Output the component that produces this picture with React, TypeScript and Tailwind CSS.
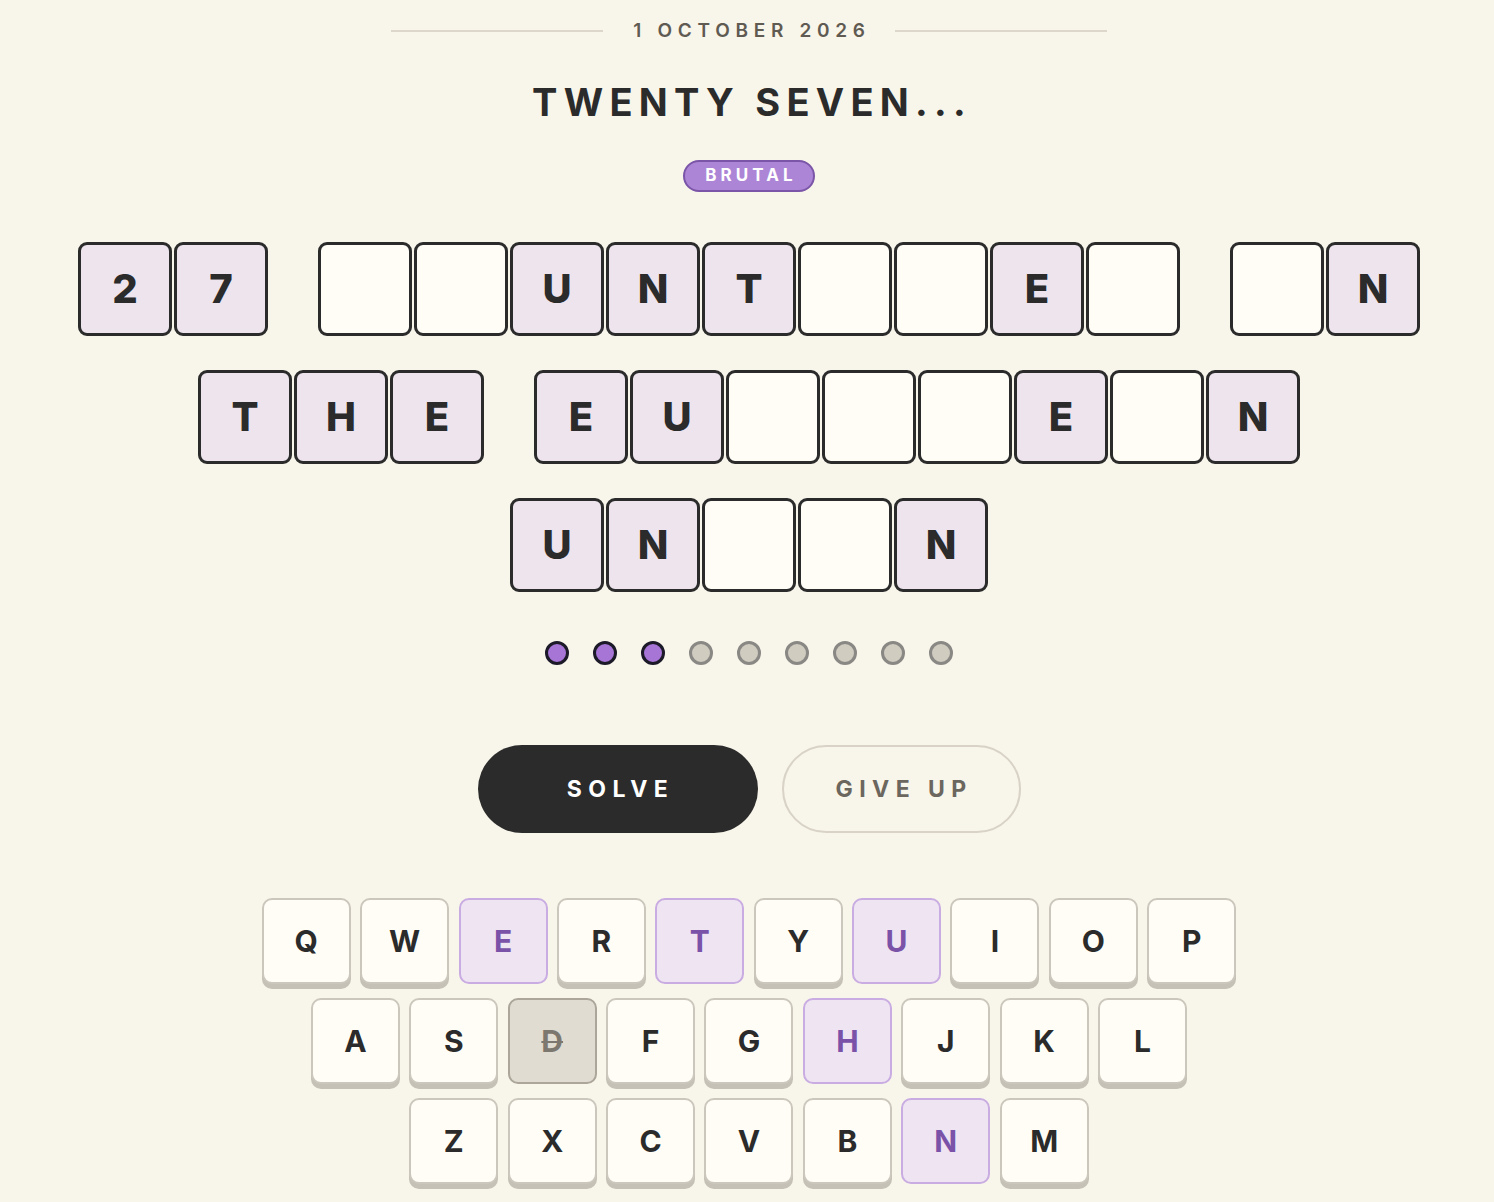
const ROWS: string[][] = [
  ["27", "  UNT  E ", " N"],
  ["THE", "EU   E N"],
  ["UN  N"],
];

const KEYS = ["QWERTYUIOP", "ASDFGHJKL", "ZXCVBNM"];
const FOUND = new Set(["E", "T", "U", "H", "N"]);
const GONE = new Set(["D"]);

const font = { fontFamily: "Inter, 'Liberation Sans', sans-serif" };

function Tile({ ch }: { ch: string }) {
  const filled = ch !== " ";
  return (
    <div
      className={`flex h-[94px] w-[94px] items-center justify-center rounded-[9px] border-[3px] border-[#2b2b2b] text-[40px] font-extrabold text-[#2b2b2b] ${
        filled ? "bg-[#ede4ee]" : "bg-[#fffdf6]"
      }`}
    >
      {filled ? ch : ""}
    </div>
  );
}

function Key({ k }: { k: string }) {
  if (FOUND.has(k)) {
    return (
      <div className="flex h-[86px] w-[89px] items-center justify-center rounded-[10px] border-2 border-[#c9ace2] bg-[#eee4f2] text-[30px] font-bold text-[#7a52a8]">
        {k}
      </div>
    );
  }
  if (GONE.has(k)) {
    return (
      <div className="flex h-[86px] w-[89px] items-center justify-center rounded-[10px] border-2 border-[#aba699] bg-[#e0dcd1] text-[30px] font-bold text-[#7d786f] line-through decoration-2">
        {k}
      </div>
    );
  }
  return (
    <div className="flex h-[86px] w-[89px] items-center justify-center rounded-[10px] border-2 border-[#cbc7bd] bg-[#fffdf6] text-[30px] font-bold text-[#2b2b2b] shadow-[0_5px_0_#c5c1b7]">
      {k}
    </div>
  );
}

export default function App() {
  return (
    <div className="flex min-h-[1202px] flex-col items-center bg-[#f8f5ea] pl-[4px]" style={font}>
      <div className="mt-[19px] flex h-[24px] items-center gap-[24px]">
        <div className="h-[2px] w-[212px] bg-[#dcd7ca]" />
        <div className="pl-[6px] text-[19px] font-semibold tracking-[0.3em] text-[#5f5a52]">1 OCTOBER 2026</div>
        <div className="h-[2px] w-[212px] bg-[#dcd7ca]" />
      </div>

      <h1 className="mt-[36px] h-[46px] pl-[6px] text-[38px] font-bold leading-[46px] tracking-[0.165em] text-[#2b2b2b]">
        TWENTY SEVEN...
      </h1>

      <div className="mt-[35px] flex h-[32px] w-[132px] items-center justify-center rounded-full border-2 border-[#7b55a8] bg-[#ac85d6] pl-[4px] text-[17px] font-bold tracking-[0.24em] text-white">
        BRUTAL
      </div>

      <div className="mt-[50px] flex flex-col items-center gap-[34px]">
        {ROWS.map((row, i) => (
          <div key={i} className="flex gap-[50px]">
            {row.map((word, j) => (
              <div key={j} className="flex gap-[2px]">
                {word.split("").map((ch, n) => (
                  <Tile key={n} ch={ch} />
                ))}
              </div>
            ))}
          </div>
        ))}
      </div>

      <div className="mt-[49px] flex gap-[24px]">
        {Array.from({ length: 9 }).map((_, i) =>
          i < 3 ? (
            <div key={i} className="h-[24px] w-[24px] rounded-full border-[3px] border-[#1c1a28] bg-[#a675d6]" />
          ) : (
            <div key={i} className="h-[24px] w-[24px] rounded-full border-[3px] border-[#8a8884] bg-[#d0ccc0]" />
          )
        )}
      </div>

      <div className="mt-[80px] flex gap-[24px]">
        <button className="flex h-[88px] w-[280px] items-center justify-center rounded-full bg-[#2b2b2b] pl-[6px] text-[23px] font-bold tracking-[0.28em] text-white">
          SOLVE
        </button>
        <button className="flex h-[88px] w-[239px] items-center justify-center rounded-full border-2 border-[#d8d3c6] pl-[6px] text-[23px] font-bold tracking-[0.28em] text-[#6b665e]">
          GIVE UP
        </button>
      </div>

      <div className="mt-[65px] flex flex-col items-center gap-[14px]">
        {KEYS.map((row, i) => (
          <div key={i} className="flex gap-[9.4px]">
            {row.split("").map((k) => (
              <Key key={k} k={k} />
            ))}
          </div>
        ))}
      </div>
    </div>
  );
}
